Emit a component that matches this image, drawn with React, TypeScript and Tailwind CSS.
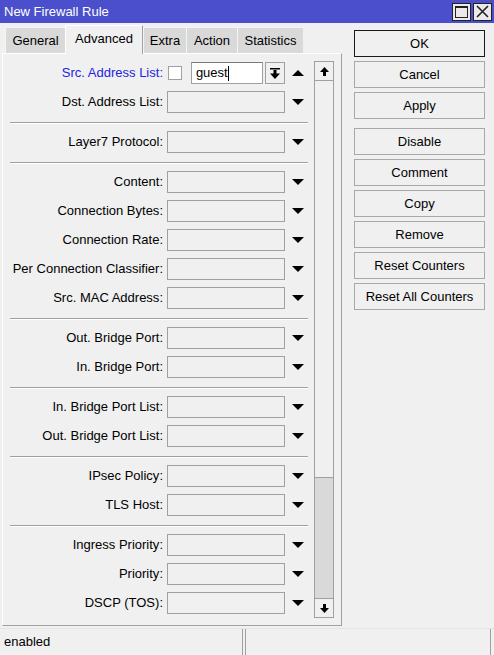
import React from "react";

const groups: string[][] = [
  ["Src. Address List", "Dst. Address List"],
  ["Layer7 Protocol"],
  ["Content", "Connection Bytes", "Connection Rate", "Per Connection Classifier", "Src. MAC Address"],
  ["Out. Bridge Port", "In. Bridge Port"],
  ["In. Bridge Port List", "Out. Bridge Port List"],
  ["IPsec Policy", "TLS Host"],
  ["Ingress Priority", "Priority", "DSCP (TOS)"],
];

const tabs = [
  { name: "General", w: "w-[60px]" },
  { name: "Advanced", w: "w-[78px]", active: true },
  { name: "Extra", w: "w-[43px]" },
  { name: "Action", w: "w-[51px]" },
  { name: "Statistics", w: "w-[66px]" },
];

const buttons = ["OK", "Cancel", "Apply", "Disable", "Comment", "Copy", "Remove", "Reset Counters", "Reset All Counters"];

const Tri = ({ up }: { up?: boolean }) => (
  <svg width="12" height="6" viewBox="0 0 12 6" className="block">
    <polygon points={up ? "0,6 12,6 6,0" : "0,0 12,0 6,6"} fill="#000" />
  </svg>
);

const ArrowBtn = ({ down }: { down?: boolean }) => (
  <div className="h-[19px] w-full border-b border-[#a0a0a0] bg-[#f0f0f0] flex items-center justify-center last:border-b-0 last:border-t">
    <svg width="9" height="9" viewBox="0 0 9 9" className={down ? "rotate-180" : ""}>
      <polygon points="4.5,0 9,5 6,5 6,9 3,9 3,5 0,5" fill="#000" />
    </svg>
  </div>
);

const Row = ({ label, first }: { label: string; first?: boolean }) => (
  <div className="flex items-center h-[22px]">
    <div className={`w-[160px] text-right whitespace-nowrap ${first ? "text-[#2323e6]" : "text-black"}`}>{label}:</div>
    {first ? (
      <div className="flex items-center ml-[4px] w-[118px]">
        <div className="w-[14px] h-[14px] bg-white border border-[#a0a0a0] ml-px" />
        <div className="ml-[9px] w-[73px] h-[22px] bg-white border border-[#a0a0a0] border-t-[#7a7a7a] flex items-center pl-[4px]">
          guest<span className="inline-block w-px h-[15px] bg-black" />
        </div>
        <div className="ml-[2px] w-[20px] h-[22px] border border-[#a0a0a0] flex items-center justify-center">
          <svg width="10" height="11" viewBox="0 0 10 11">
            <rect x="0" y="0" width="10" height="1.5" fill="#000" />
            <rect x="3.5" y="2" width="3" height="4" fill="#000" />
            <polygon points="0,5.5 10,5.5 5,11" fill="#000" />
          </svg>
        </div>
      </div>
    ) : (
      <div className="ml-[4px] w-[118px] h-[22px] border border-[#a0a0a0] bg-[#f0f0f0]" />
    )}
    <div className="ml-[7px]">
      <Tri up={first} />
    </div>
  </div>
);

export default function App() {
  return (
    <div className="w-[494px] h-[655px] bg-[#f0f0f0] flex flex-col overflow-hidden font-['Liberation_Sans',Arial,sans-serif] text-[13px] text-black">
      {/* title bar */}
      <div className="h-[23px] bg-[#4b4fcb] flex items-center pl-[4px] pr-[2px] text-white shrink-0">
        <span className="flex-1 leading-none">New Firewall Rule</span>
        <div className="flex gap-[2px]">
          <div className="w-[19px] h-[18px] bg-[#ece9ea] border border-[#222] flex items-center justify-center">
            <div className="w-[13px] h-[12px] border border-[#222] border-t-2" />
          </div>
          <div className="w-[19px] h-[18px] bg-[#ece9ea] border border-[#222] flex items-center justify-center">
            <svg width="13" height="13" viewBox="0 0 13 13">
              <path d="M1 1 L12 12 M12 1 L1 12" stroke="#222" strokeWidth="1.6" />
            </svg>
          </div>
        </div>
      </div>

      <div className="flex flex-1 min-h-0">
        {/* left: tabs + panel */}
        <div className="w-[342px] pl-[2px] pt-[2px] pb-[2px] flex flex-col">
          <div className="h-[28px] flex items-end pl-[3px] relative z-10">
            {tabs.map((t) =>
              t.active ? (
                <div key={t.name} className={`${t.w} h-[29px] -mb-px bg-[#f0f0f0] border-t border-l border-white border-r border-r-[#a0a0a0] flex items-center justify-center pb-[3px]`}>
                  {t.name}
                </div>
              ) : (
                <div key={t.name} className={`${t.w} h-[26px] bg-[#d9d9d9] border-t border-l border-[#f4f4f4] flex items-center justify-center`}>
                  {t.name}
                </div>
              )
            )}
          </div>
          <div className="flex-1 flex border-t border-l border-white border-r border-b border-r-[#a0a0a0] border-b-[#a0a0a0]">
            <div className="flex-1 flex flex-col gap-[7px] pt-[8px]">
              {groups.map((g, gi) => (
                <React.Fragment key={gi}>
                  {gi > 0 && <div className="ml-[7px] w-[298px] h-[2px] mt-[2px] border-t border-[#a0a0a0] border-b border-b-white" />}
                  {g.map((l) => (
                    <Row key={l} label={l} first={l === "Src. Address List"} />
                  ))}
                </React.Fragment>
              ))}
            </div>
            <div className="w-[20px] mr-[7px] mt-[7px] mb-[7px] border border-[#a0a0a0] flex flex-col">
              <ArrowBtn />
              <div className="h-[397px] bg-[#f0f0f0] border-b border-[#a0a0a0]" />
              <div className="flex-1 bg-[#d9d9d9]" />
              <ArrowBtn down />
            </div>
          </div>
        </div>

        {/* right: buttons */}
        <div className="pl-[12px] pt-[7px] flex flex-col gap-[4px]">
          {buttons.map((b, i) => (
            <div
              key={b}
              className={`w-[131px] h-[27px] flex items-center justify-center bg-[#f0f0f0] border ${
                i === 0 ? "border-[#1a1a1a]" : "border-[#a8a8a8]"
              } ${i === 3 ? "mt-[5px]" : ""}`}
            >
              {b}
            </div>
          ))}
        </div>
      </div>

      {/* status bar */}
      <div className="h-[27px] flex shrink-0 border-t border-[#e4e4e4]">
        <div className="w-[243px] border-r border-[#a0a0a0] flex items-center pl-[4px]">enabled</div>
        <div className="w-[246px] ml-[2px] border-l border-r border-[#a0a0a0]" />
      </div>
    </div>
  );
}
